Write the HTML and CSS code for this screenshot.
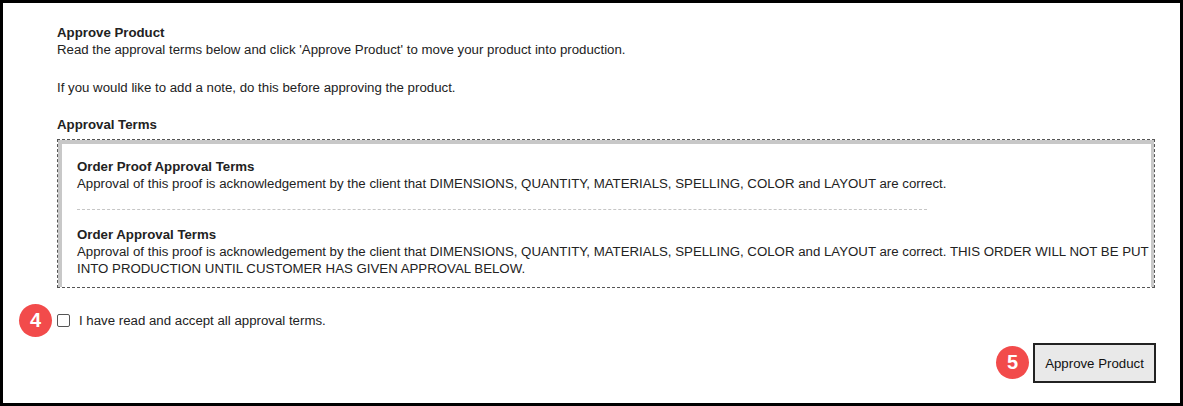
FILE: index.html
```html
<!DOCTYPE html>
<html>
<head>
<meta charset="utf-8">
<link rel="stylesheet" href="styles.css">
</head>
<body>
<div class="frame">
  <div class="content">
    <div class="intro">
      <div class="title">Approve Product</div>
      <p class="line">Read the approval terms below and click 'Approve Product' to move your product into production.</p>
      <p class="line gap">If you would like to add a note, do this before approving the product.</p>
      <div class="title gap2">Approval Terms</div>
    </div>
    <div class="terms-outer">
      <div class="terms">
        <div class="term">
          <div class="term-title">Order Proof Approval Terms</div>
          <div class="term-text">Approval of this proof is acknowledgement by the client that DIMENSIONS, QUANTITY, MATERIALS, SPELLING, COLOR and LAYOUT are correct.</div>
        </div>
        <hr class="sep">
        <div class="term">
          <div class="term-title">Order Approval Terms</div>
          <div class="term-text">Approval of this proof is acknowledgement by the client that DIMENSIONS, QUANTITY, MATERIALS, SPELLING, COLOR and LAYOUT are correct. THIS ORDER WILL NOT BE PUT INTO PRODUCTION UNTIL CUSTOMER HAS GIVEN APPROVAL BELOW.</div>
        </div>
      </div>
    </div>
    <label class="accept">
      <span class="badge badge-4">4</span>
      <span class="box"></span>
      <span class="accept-text">I have read and accept all approval terms.</span>
    </label>
    <div class="actions">
      <span class="badge badge-5">5</span>
      <button class="approve">Approve Product</button>
    </div>
  </div>
</div>
</body>
</html>
```

FILE: styles.css
```css
html, body {
  margin: 0;
  padding: 0;
  background: #fff;
}
body {
  font-family: "Liberation Sans", Arial, Helvetica, sans-serif;
  font-size: 13.25px;
  color: #222;
}
.frame {
  box-sizing: border-box;
  width: 1183px;
  height: 406px;
  border: 3px solid #000;
  background: #fff;
  overflow: hidden;
}
.content {
  padding: 21px 24px 0 54px;
  position: relative;
}
.title {
  font-weight: bold;
  line-height: 17px;
}
.line {
  margin: 0;
  line-height: 17px;
}
.gap {
  margin-top: 21px;
}
.gap2 {
  margin-top: 20px;
}
.intro {
  margin-bottom: 6px;
}
.terms-outer {
  border: 1px dashed #555;
  height: 149px;
  overflow: hidden;
  box-sizing: border-box;
  margin-right: 1px;
}
.terms {
  border: 4px solid #c8c8c8;
  border-bottom: none;
  border-right-width: 3px;
  height: 100%;
  box-sizing: border-box;
  padding: 14px 0 0 15px;
}
.term-title {
  font-weight: bold;
  line-height: 17px;
}
.term-text {
  line-height: 17.5px;
}
.sep {
  border: none;
  border-top: 1px dashed #c6c6c6;
  width: 850px;
  margin: 16px 0 16px 0;
}
.accept {
  display: flex;
  align-items: center;
  margin-top: 24px;
  position: relative;
  height: 16px;
}
.box {
  width: 11px;
  height: 11px;
  border: 1px solid #555;
  border-radius: 2px;
  background: #fff;
  margin-right: 9px;
}
.accept-text {
  color: #222;
}
.actions {
  display: flex;
  justify-content: flex-end;
  position: relative;
  margin-top: 15px;
}
.approve {
  font-family: "Liberation Sans", Arial, Helvetica, sans-serif;
  font-size: 13.25px;
  color: #111;
  background: #e9e9e9;
  border: 2px solid #222;
  width: 123px;
  height: 40px;
  padding: 0;
  margin: 0;
}
.badge {
  position: absolute;
  width: 33px;
  height: 33px;
  border-radius: 50%;
  background: #f24b4b;
  color: #fff;
  font-family: "Liberation Sans", Arial, sans-serif;
  font-weight: bold;
  font-size: 20px;
  display: flex;
  align-items: center;
  justify-content: center;
}
.badge-4 {
  left: -38px;
  top: -8px;
}
.badge-5 {
  right: 127px;
  top: 3px;
}
```
